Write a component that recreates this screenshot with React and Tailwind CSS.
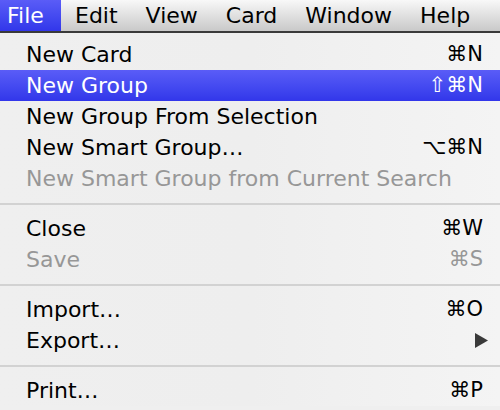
const menus = ["File", "Edit", "View", "Card", "Window", "Help"];

const items = [
	{ label: "New Card", key: "⌘N" },
	{ label: "New Group", key: "⇧⌘N", active: true },
	{ label: "New Group From Selection" },
	{ label: "New Smart Group…", key: "⌥⌘N" },
	{ label: "New Smart Group from Current Search", disabled: true },
	"sep",
	{ label: "Close", key: "⌘W" },
	{ label: "Save", key: "⌘S", disabled: true },
	"sep",
	{ label: "Import…", key: "⌘O" },
	{ label: "Export…", submenu: true },
	"sep",
	{ label: "Print…", key: "⌘P" },
];

const App = () => {
	return (
		<div className="w-[500px] h-[410px] overflow-hidden bg-[#efefef] font-['DejaVu_Sans',sans-serif] text-[22px] text-black">
			{/* Menu bar */}
			<div className="h-[33px] flex items-stretch bg-gradient-to-b from-[#f8f8f8] to-[#c9c9c9] border-b-2 border-[#3a3a3a]">
				{menus.map((m, i) => (
					<div
						key={m}
						className={
							i === 0
								? "pl-[7px] w-[61px] flex items-center bg-gradient-to-b from-[#5a5cf7] to-[#3236ea] text-white"
								: "px-[14px] flex items-center"
						}
					>
						{m}
					</div>
				))}
			</div>

			{/* Menu */}
			<div className="pt-[6px] bg-gradient-to-r from-[#efefef] via-[#eeeeee] to-[#f4f4f4]">
				{items.map((it, i) =>
					it === "sep" ? (
						<div key={i} className="h-[19px] flex items-center">
							<div className="w-full h-[2px] bg-[#d2d2d2]" />
						</div>
					) : (
						<div
							key={i}
							className={
								"h-[31px] flex items-center justify-between pl-[26px] pr-[17px] " +
								(it.active ? "bg-gradient-to-b from-[#5a5cf7] to-[#3236ea] text-white" : it.disabled ? "text-[#979797]" : "")
							}
						>
							<span>{it.label}</span>
							{it.key && <span className="text-[21px]">{it.key}</span>}
							{it.submenu && (
								<svg width="13" height="15" viewBox="0 0 13 15" className="mr-[-5px]">
									<path d="M0 0 L13 7.5 L0 15 Z" fill="#3a3a3a" />
								</svg>
							)}
						</div>
					)
				)}
			</div>
		</div>
	);
};

export default App;
